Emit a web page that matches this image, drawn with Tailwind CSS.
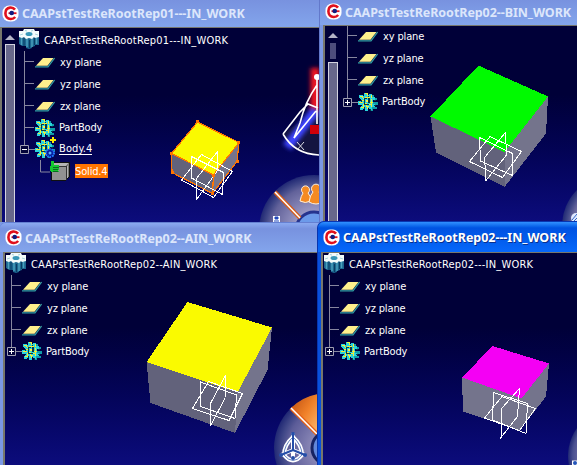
<!DOCTYPE html>
<html lang="en">
<head>
<meta charset="utf-8">
<title>CAAPstTestReRootRep</title>
<script src="https://cdn.jsdelivr.net/npm/@tailwindcss/browser@4"></script>
</head>
<body class="w-[577px] h-[465px] overflow-hidden relative bg-[#7b98e4] font-['DejaVu_Sans_Condensed','DejaVu_Sans',sans-serif] text-[11px] leading-none tracking-[-0.15px] text-white">
<svg width="0" height="0" class="absolute">
  <defs>
    <symbol id="logo" viewBox="0 0 17 17">
      <rect x=".5" y=".5" width="16" height="16" rx="6.5" fill="#fff"/>
      <path d="M13 4.6C11.5 2.7 9.8 2.4 8 2.6 5 3 3.4 5.400 3.400 8.300 3.400 11.500 5.500 13.800 8.600 14 10.400 14.100 12 13.400 13.200 12" fill="none" stroke="#e0101c" stroke-width="2.600"/>
      <path d="M6.500 8.200h8" stroke="#e0101c" stroke-width="1.800"/><circle cx="9.700" cy="8" r="2.300" fill="#101c80"/>
    </symbol>
    <symbol id="part" viewBox="0 0 20 20">
      <path d="M0 4h20v12h-4v1l-3 1v1l-3 1-3-1v-2H3l-3-2z" fill="#1c6690"/>
      <path d="M2.500 8v8M8 9v9M13 9v9M17.500 8v7" stroke="#4aa0bc" stroke-width="1.500"/><path d="M5 9v8M10.500 11v8M15.500 9v7" stroke="#0a3d62"/>
      <path d="M0 2h4l1-2h10l1 2h4v6l-4 1-1-1-2 2-3-1-3 1-2-2-2 1-3-1z" fill="#f4fbfb"/>
      <ellipse cx="10" cy="5" rx="3.500" ry="2" fill="#3898b8"/><path d="M1 6l3-1M16 5l3 1M6 1.500l2 .5M12 2l2-.5" stroke="#a8d4dc"/>
    </symbol>
    <symbol id="plane" viewBox="0 0 20 11">
      <path d="M0 9.800h13L19.600 1" fill="none" stroke="#32a0a4" stroke-width="1.200"/>
      <path d="M1 8.700 8 1H18.500L12.500 8.700z" fill="#fff08c"/>
    </symbol>
    <symbol id="gear" viewBox="0 0 20 20" shape-rendering="crispEdges">
      <path d="M12 3h4v3h3v2h-4v2h5v3h-5v2h4v2h-4v2h-3z" fill="#109ca8"/>
      <path d="M6 1h3v3l2-2h3v3h3v3h-2v4h2v3h-3v3h-2l-2-2v3H7v-3l-3 2H2v-3l2-2H0V9h3V7L1 6V3h3l2 1z" fill="#28d4dc"/>
      <path d="M7 1h2v3M2 4h2v2M13 3v3M1 10h4M3 15h2v-3M9 17v-3M13 15v-2M15 10h-3M5 6h2V5h5M4 8h2v3h2v3h3M11 12h2V7" fill="none" stroke="#f4ee36" stroke-width="1"/>
      <path d="M6 6h3v1H7v5h4v1H6zM10 6h2v5h-2z" fill="#06394a"/><path d="M8 8h2v2H8z" fill="#fff246"/>
      <path d="M3 8h1v2H3zM6 15h1v2H6zM12 17h1v2h-1zM16 8h2v1h-2zM16 13h2v1h-2zM10 4h1v1h-1z" fill="#063848"/>
    </symbol>
    <symbol id="solid" viewBox="0 0 20 20" shape-rendering="crispEdges">
      <path d="M1 5 4 1h15v15l-3 3H1z" fill="#777" stroke="#101010"/><path d="M2 6h14v13H2z" fill="#929292"/><path d="M4 2h14l-2 3H2zM17 5l1-1v12l-1 1z" fill="#b4b4b4"/><path d="M16.500 5v14M2 5.500h15" stroke="#333"/>
      <path d="M1 0h3v4h5v2H8v1h1v2H8v1h1v1H2L0 10V5l1-1z" fill="#16c830"/><path d="M3 6h6M3 8h5M3 10h5" stroke="#04551a" stroke-width=".8"/>
    </symbol>
    <symbol id="branch" viewBox="0 0 16 22"><path d="M5.500 0v22M5.500 10.500H15" stroke="#87879f" fill="none"/></symbol>
    <symbol id="branch-plus" viewBox="0 0 16 22"><path d="M5.500 0v7M10 11.500h6" stroke="#87879f"/><path d="M1.500 7.500h8v8h-8z" fill="#04043a" stroke="#a0a0b2"/><path d="M3 11.500h5M5.500 9v5" stroke="#fff"/></symbol>
    <symbol id="branch-minus" viewBox="0 0 16 22"><path d="M5.500 0v7M10 11.500h6" stroke="#87879f"/><path d="M1.500 7.500h8v8h-8z" fill="#04043a" stroke="#a0a0b2"/><path d="M3 11.500h5" stroke="#fff"/></symbol>
  </defs>
</svg>

<!-- Rep01 window -->
<section class="absolute left-0 top-0 w-[320px] h-[225px] flex flex-col bg-[#7b98e4]">
  <header class="h-[27px] shrink-0 flex items-center gap-[3px] pl-[2px] bg-linear-to-b from-[#7892df] to-[#83a5ec]">
    <svg class="size-[17px]"><use href="#logo"/></svg>
    <h1 class="whitespace-nowrap pt-[2px] font-['Noto_Sans'] font-bold text-[12.5px] tracking-[-0.03px] text-[#dce6fb]">CAAPstTestReRootRep01---IN_WORK</h1>
  </header>
  <div class="relative h-[195px] w-[319px] border-t border-l-2 border-[#77776c] bg-linear-to-b from-[#000038] from-35% to-[#0c0c7c] overflow-hidden flex">
    <svg class="absolute -left-[2px] -top-px" width="321" height="195" viewBox="0 27 321 195">
      <defs>
        <filter id="soft" filterUnits="userSpaceOnUse" x="260" y="40" width="80" height="140"><feGaussianBlur stdDeviation="2"/></filter>
        <radialGradient id="wheel1"><stop offset=".35" stop-color="#9a98c4"/><stop offset=".78" stop-color="#62629a"/><stop offset=".88" stop-color="#414888"/><stop offset="1" stop-color="#202874"/></radialGradient>
      </defs>
      <path d="M283 134q12 21 38 21v-45l-12 5z" fill="#141440"/>
      <path d="M315 68v44" stroke="#f01820" stroke-width="9" filter="url(#soft)"/>
      <path d="M287 147 316 110" stroke="#3c44ff" stroke-width="10" filter="url(#soft)"/>
      <path d="M317 77v47M317 85q-12 17-17 38l-6 15 22-27M283 134l17-22 8-8 10 4M283 134q12 21 38 21" fill="none" stroke="#fff" stroke-width="1.600"/>
      <circle cx="317" cy="77" r="3" fill="#fff"/><path d="M310 125h11v9h-11z" fill="#d00008"/><path d="M297 142l7 8M304 142l-7 8" stroke="#dedee8"/>
      <circle cx="314" cy="230" r="55" fill="url(#wheel1)"/><circle cx="314" cy="230" r="18" fill="#6c9aea" stroke="#26348e" stroke-width="3"/>
      <path d="M275 192l25 26" stroke="#d35b1b" stroke-width="4"/><path d="M275 192l25 26" stroke="#fff" stroke-width="1.500"/>
      <g fill="#f48a22" stroke="#fff1dd" stroke-width="1"><path d="M300 201q1-5 3-8a4 4 0 1 1 5 0q3 3 3 8-6 3-11 0z"/><path d="M309 202q1-7 4-10a4.500 4.500 0 1 1 6 0q4 4 4 10-7 4-14 0z"/></g>
      <path d="M273 216h7v6h-7z" fill="#fff"/><path d="M275 217h3v2h-3zM274 221h5" fill="#2048bd" stroke="#2048bd"/>
      <g shape-rendering="crispEdges">
        <path d="M171.500 153.500 213.500 175 212.500 193.500 172 172.500z" fill="#62627b"/><path d="M213.500 175 239 142.500 237 161.500 212.500 193.500z" fill="#74748c"/>
        <path d="M197.500 122 239 142.500 213.500 175 171.500 153.500z" fill="#fafa00"/>
        <path d="M197.500 122 239 142.500 213.500 175 171.500 153.500zM171.500 153.500l.5 19 40.500 21 24.500-32 2-19M213.500 175l-1 18.500" fill="none" stroke="#ff7500" stroke-width="1.200"/>
        <path d="M191.500 156.500v21.500l31 16.500 1-22zM181.500 180l20-25.500 31 17-19 26zM196.500 199.500v-21l21-27-.5 20z" fill="none" stroke="#fff"/>
        <path d="M196 120h3v3h-3zM237 141h3v3h-3zM170 152h3v3h-3zM171 171h3v3h-3zM211 192h3v3h-3zM236 160h3v3h-3zM212 174h3v3h-3z" fill="#ff7500"/>
      </g>
    </svg>
    <div class="relative ml-[3px] w-[10px] shrink-0 flex flex-col items-center pt-[7px]">
      <svg width="10" height="5" viewBox="0 0 10 5"><path d="M0 5 5 0l5 5z" fill="#b4b4c6"/></svg>
      <div class="mt-[4px] w-[10px] flex-1 bg-[#68688b] border-x border-t border-[#d4d4df]"></div>
    </div>
    <ul class="relative ml-[4px] mt-px w-[220px]">
      <li class="h-[22px] flex items-center gap-[5px]"><svg class="size-5 mb-[3px]"><use href="#part"/></svg><span class="whitespace-nowrap tracking-[0.2px]">CAAPstTestReRootRep01---IN_WORK</span></li>
      <li class="h-[22px] flex items-center"><svg class="w-4 h-[22px]"><use href="#branch"/></svg><svg class="w-5 h-[11px] mr-[5px]"><use href="#plane"/></svg>xy plane</li>
      <li class="h-[22px] flex items-center"><svg class="w-4 h-[22px]"><use href="#branch"/></svg><svg class="w-5 h-[11px] mr-[5px]"><use href="#plane"/></svg>yz plane</li>
      <li class="h-[22px] flex items-center"><svg class="w-4 h-[22px]"><use href="#branch"/></svg><svg class="w-5 h-[11px] mr-[5px]"><use href="#plane"/></svg>zx plane</li>
      <li class="h-[21px] flex items-center"><svg class="w-4 h-[22px]"><use href="#branch"/></svg><svg class="size-5 mr-[4px]"><use href="#gear"/></svg>PartBody</li>
      <li class="h-[22px] flex items-center relative"><svg class="w-4 h-[22px]"><use href="#branch-minus"/></svg><svg class="size-5 mr-[4px]"><use href="#gear"/></svg><span class="border-b border-white tracking-[0.1px]">Body.4</span>
        <svg class="absolute left-[25px] -top-[2px]" width="14" height="24" viewBox="0 0 14 24"><path d="M9 1v6M6 4h6" stroke="#ffed00" stroke-width="2"/><circle cx="6" cy="17" r="4" fill="#071b9d" stroke="#2474ff" stroke-width="2" stroke-dasharray="1.500 1"/><circle cx="6" cy="17" r="1.500" fill="#58b0ff"/></svg></li>
      <li class="h-[21px] flex items-center"><svg width="31" height="22" viewBox="0 0 31 22"><path d="M21.500 0v12H31" fill="none" stroke="#87879f"/></svg><svg class="size-5 mr-[5px]"><use href="#solid"/></svg><span class="bg-[#ff7500] h-[14px] pt-[2px] w-[33px] whitespace-nowrap">Solid.4</span></li>
    </ul>
  </div>
</section>

<!-- Rep02 B window -->
<section class="absolute left-[319px] top-0 w-[258px] h-[225px] flex flex-col bg-[#7b98e4] border-l border-[#6278ca]">
  <header class="h-[25px] shrink-0 flex items-center gap-[3px] pl-[5px] bg-linear-to-b from-[#7892df] to-[#83a5ec]">
    <svg class="size-[17px] mt-[-3px]"><use href="#logo"/></svg>
    <h1 class="whitespace-nowrap pt-px font-['Noto_Sans'] font-bold text-[12.5px] tracking-[-0.06px] text-[#dce6fb]">CAAPstTestReRootRep02--BIN_WORK</h1>
  </header>
  <div class="relative ml-[3px] h-[197px] border-t border-l-2 border-[#77776c] bg-linear-to-b from-[#000038] from-35% to-[#0c0c7c] overflow-hidden flex">
    <svg class="absolute -left-[2px] -top-px" width="254" height="197" viewBox="323 25 254 197">
      <defs><radialGradient id="wheel2"><stop offset=".6" stop-color="#9a98c4"/><stop offset=".82" stop-color="#62629a"/><stop offset=".9" stop-color="#414888"/><stop offset="1" stop-color="#202874"/></radialGradient></defs>
      <circle cx="613" cy="226" r="51" fill="url(#wheel2)"/><circle cx="576" cy="218" r="5" fill="#dfe8ff"/><path d="M572 220l5-6M573 222l4-4" stroke="#3468c8"/>
      <g shape-rendering="crispEdges">
        <path d="M430.500 116.500 504.500 152V187L436 152.500z" fill="#62627b"/><path d="M504.500 152 548 96.500 546 133.500 504.500 187z" fill="#74748c"/>
        <path d="M478.500 65.500 548 96.500 504.500 152 430.500 116.500z" fill="#00fa00"/>
        <path d="M479.500 137.500l1 23.500 32 14.500v-22zM469.500 161.500l20.500-25 31.500 15-19 26zM486 180.500l-1.500-23 21-25 1 22.500z" fill="none" stroke="#fff"/>
      </g>
    </svg>
    <div class="relative ml-[3px] w-[10px] shrink-0 flex flex-col items-center pt-[7px]">
      <svg width="10" height="5" viewBox="0 0 10 5"><path d="M0 5 5 0l5 5z" fill="#b4b4c6"/></svg>
      <div class="mt-[5px] w-[6px] h-[16px] bg-[#4e4e7c]"></div>
      <div class="mt-[3px] w-[10px] flex-1 bg-[#68688b] border-x border-t border-[#d4d4df]"></div>
    </div>
    <ul class="relative ml-[4px] -mt-px w-[110px]">
      <li class="h-[22px] flex items-center"><svg class="w-4 h-[22px]"><use href="#branch"/></svg><svg class="w-5 h-[11px] mr-[5px]"><use href="#plane"/></svg>xy plane</li>
      <li class="h-[22px] flex items-center"><svg class="w-4 h-[22px]"><use href="#branch"/></svg><svg class="w-5 h-[11px] mr-[5px]"><use href="#plane"/></svg>yz plane</li>
      <li class="h-[22px] flex items-center"><svg class="w-4 h-[22px]"><use href="#branch"/></svg><svg class="w-5 h-[11px] mr-[5px]"><use href="#plane"/></svg>zx plane</li>
      <li class="h-[21px] flex items-center"><svg class="w-4 h-[22px]"><use href="#branch-plus"/></svg><svg class="size-5 mr-[4px]"><use href="#gear"/></svg>PartBody</li>
    </ul>
  </div>
</section>

<!-- Rep02 A window -->
<section class="absolute left-0 top-[222px] w-[320px] h-[243px] flex flex-col bg-[#7b98e4] rounded-tl-[6px] border-t border-[#6580d2]">
  <header class="h-[29px] shrink-0 flex items-center gap-[3px] pl-[5px] bg-linear-to-b from-[#8caaf0] via-[#7892df] via-20% to-[#83a5ec] rounded-tl-[6px]">
    <svg class="size-[17px]"><use href="#logo"/></svg>
    <h1 class="whitespace-nowrap pt-[3px] font-['Noto_Sans'] font-bold text-[12.5px] tracking-[-0.06px] text-[#dce6fb]">CAAPstTestReRootRep02--AIN_WORK</h1>
  </header>
  <div class="relative ml-[3px] h-[213px] border-t border-l-2 border-[#77776c] bg-linear-to-b from-[#000038] from-35% to-[#0c0c7c] overflow-hidden">
    <svg class="absolute -left-[2px] -top-px" width="317" height="213" viewBox="3 252 317 213">
      <defs>
        <radialGradient id="wheel3"><stop offset=".35" stop-color="#8684b4"/><stop offset=".75" stop-color="#5c5c98"/><stop offset=".86" stop-color="#414888"/><stop offset="1" stop-color="#202874"/></radialGradient>
        <linearGradient id="orange" x1="0" y1="0" x2="1" y2="1"><stop offset="0" stop-color="#b84b10"/><stop offset=".5" stop-color="#f08028"/><stop offset="1" stop-color="#ffbd70"/></linearGradient>
      </defs>
      <circle cx="329" cy="448" r="55" fill="url(#wheel3)"/><path d="M291 408q11-11 27-14v41z" fill="url(#orange)"/><path d="M291 408l26 26" stroke="#e16019" stroke-width="4"/><path d="M291 408l26 26" stroke="#fff" stroke-width="1.600"/>
      <circle cx="329" cy="448" r="17" fill="#6287d8" stroke="#172361" stroke-width="3"/>
      <g fill="none" stroke="#fff" stroke-width="4"><path d="M293 433v17M293 450l-12 5M293 450l12 5M293 437q-9 8-9 18 9 11 18 0 0-10-9-18M293 450v9"/></g>
      <g fill="none" stroke="#244da8" stroke-width=".7"><path d="M293 434v16l-12 5M293 450l12 5" stroke-width="2"/><path d="M293 437q-9 8-9 18 9 11 18 0 0-10-9-18"/></g><g fill="#244da8"><circle cx="293" cy="434" r="2"/><circle cx="281" cy="455" r="2"/><circle cx="305" cy="455" r="2"/><circle cx="293" cy="458" r="2"/></g>
      <g shape-rendering="crispEdges">
        <path d="M146.500 362 237.500 392.500 235 433 150.500 403z" fill="#62627b"/><path d="M237.500 392.500 272 327.500 267.500 370 235 433z" fill="#74748c"/>
        <path d="M187.500 302 272 327.500 237.500 392.500 146.500 362z" fill="#fafa00"/>
        <path d="M200.500 382v24.500l34.500 12 1.500-23.500zM192.500 408.500l16-27 34 12-13.500 27zM210.500 425.500l.5-23 14.500-27-.5 23z" fill="none" stroke="#fff"/>
      </g>
    </svg>
    <ul class="relative ml-px w-[230px]">
      <li class="h-[22px] flex items-center gap-[5px]"><svg class="size-5 mb-[2px]"><use href="#part"/></svg><span class="whitespace-nowrap tracking-[0.17px]">CAAPstTestReRootRep02--AIN_WORK</span></li>
      <li class="h-[22px] flex items-center"><svg class="w-4 h-[22px]"><use href="#branch"/></svg><svg class="w-5 h-[11px] mr-[5px]"><use href="#plane"/></svg>xy plane</li>
      <li class="h-[22px] flex items-center"><svg class="w-4 h-[22px]"><use href="#branch"/></svg><svg class="w-5 h-[11px] mr-[5px]"><use href="#plane"/></svg>yz plane</li>
      <li class="h-[22px] flex items-center"><svg class="w-4 h-[22px]"><use href="#branch"/></svg><svg class="w-5 h-[11px] mr-[5px]"><use href="#plane"/></svg>zx plane</li>
      <li class="h-[20px] flex items-center"><svg class="w-4 h-[22px]"><use href="#branch-plus"/></svg><svg class="size-5 mr-[4px]"><use href="#gear"/></svg>PartBody</li>
    </ul>
  </div>
</section>

<!-- Active Rep02 window -->
<section class="absolute left-[317px] top-[221px] w-[260px] h-[244px] flex flex-col bg-[#0850dc] rounded-tl-[7px] border-l border-t border-[#0835b0]">
  <header class="h-[30px] shrink-0 flex items-center gap-[3px] pl-[5px] rounded-tl-[6px] bg-linear-to-b from-[#3090ff] via-[#0052e2] via-20% to-[#0768fa]">
    <svg class="size-[17px]"><use href="#logo"/></svg>
    <h1 class="whitespace-nowrap pt-[2px] font-['Noto_Sans'] font-bold text-[12.5px] tracking-[-0.03px] text-white [text-shadow:1px_1px_0_#0a2f8c]">CAAPstTestReRootRep02---IN_WORK</h1>
  </header>
  <div class="relative ml-[3px] h-[213px] border-t border-l-2 border-[#77776c] bg-linear-to-b from-[#000038] from-35% to-[#0c0c7c] overflow-hidden">
    <svg class="absolute -left-[2px] -top-px" width="256" height="213" viewBox="321 252 256 213">
      <defs><radialGradient id="wheel4"><stop offset=".7" stop-color="#7472a8"/><stop offset=".9" stop-color="#4a5090"/><stop offset="1" stop-color="#202874"/></radialGradient></defs>
      <circle cx="616" cy="456" r="48" fill="url(#wheel4)"/><path d="M572 463h5" stroke="#fff" stroke-width="5"/><circle cx="575" cy="463" r="2" fill="#2455b9"/>
      <g shape-rendering="crispEdges">
        <path d="M462 377.500 521.500 398.500 519.500 430.500 463 411.500z" fill="#74748c"/><path d="M521.500 398.500 549 363.500 546 396.500 519.500 430.500z" fill="#74748c"/>
        <path d="M492.500 346 549 363.500 521.500 398.500 462 377.500z" fill="#f400f4"/>
        <path d="M493.500 392.500l-1 27.500 33.500 13.500 1.500-30zM484.500 418l17.500-21.500 33.500 12-16 22zM501 437.500l.5-29 18-20-2 28z" fill="none" stroke="#fff"/>
      </g>
    </svg>
    <ul class="relative ml-px w-[230px]">
      <li class="h-[22px] flex items-center gap-[5px]"><svg class="size-5 mb-[2px]"><use href="#part"/></svg><span class="whitespace-nowrap tracking-[0.2px]">CAAPstTestReRootRep02---IN_WORK</span></li>
      <li class="h-[22px] flex items-center"><svg class="w-4 h-[22px]"><use href="#branch"/></svg><svg class="w-5 h-[11px] mr-[5px]"><use href="#plane"/></svg>xy plane</li>
      <li class="h-[22px] flex items-center"><svg class="w-4 h-[22px]"><use href="#branch"/></svg><svg class="w-5 h-[11px] mr-[5px]"><use href="#plane"/></svg>yz plane</li>
      <li class="h-[22px] flex items-center"><svg class="w-4 h-[22px]"><use href="#branch"/></svg><svg class="w-5 h-[11px] mr-[5px]"><use href="#plane"/></svg>zx plane</li>
      <li class="h-[20px] flex items-center"><svg class="w-4 h-[22px]"><use href="#branch-plus"/></svg><svg class="size-5 mr-[4px]"><use href="#gear"/></svg>PartBody</li>
    </ul>
  </div>
</section>
</body>
</html>
